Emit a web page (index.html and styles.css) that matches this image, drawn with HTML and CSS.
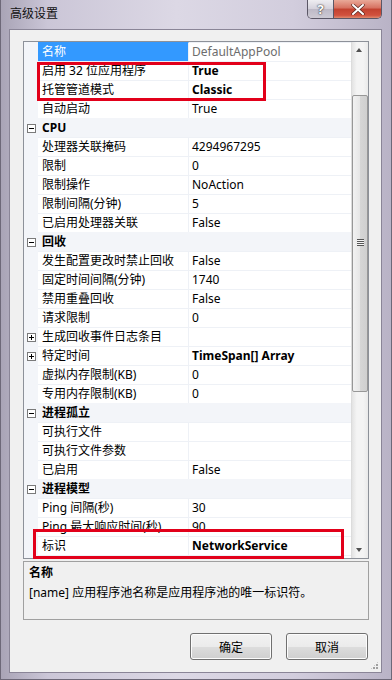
FILE: index.html
```html
<!DOCTYPE html>
<html>
<head>
    <meta charset="utf-8">
    <link rel="stylesheet" href="styles.css">
</head>
<body>
    <div class="window">
        <div class="titlebar">
            <span class="title">高级设置</span>
            <div class="caption-btns">
                <span class="cap help">?</span>
                <span class="cap close">
                    <svg width="14" height="11" viewBox="0 0 14 11">
                        <path d="M2 1 L12 10 M12 1 L2 10" stroke="#5a2a22" stroke-width="3.4" stroke-linecap="round"/>
                        <path d="M2 1 L12 10 M12 1 L2 10" stroke="#ffffff" stroke-width="2" stroke-linecap="round"/>
                    </svg>
                </span>
            </div>
        </div>

        <div class="client">
            <div class="grid">
                <div class="rows">
                    <div class="row selected"><span class="gutter"></span><span class="name">名称</span><span class="value readonly">DefaultAppPool</span></div>
                    <div class="row"><span class="gutter"></span><span class="name">启用 32 位应用程序</span><span class="value bold">True</span></div>
                    <div class="row"><span class="gutter"></span><span class="name">托管管道模式</span><span class="value bold">Classic</span></div>
                    <div class="row"><span class="gutter"></span><span class="name">自动启动</span><span class="value">True</span></div>

                    <div class="row category"><span class="gutter"><i class="toggle"></i></span><span class="cat-name">CPU</span></div>
                    <div class="row"><span class="gutter"></span><span class="name">处理器关联掩码</span><span class="value">4294967295</span></div>
                    <div class="row"><span class="gutter"></span><span class="name">限制</span><span class="value">0</span></div>
                    <div class="row"><span class="gutter"></span><span class="name">限制操作</span><span class="value">NoAction</span></div>
                    <div class="row"><span class="gutter"></span><span class="name">限制间隔(分钟)</span><span class="value">5</span></div>
                    <div class="row"><span class="gutter"></span><span class="name">已启用处理器关联</span><span class="value">False</span></div>

                    <div class="row category"><span class="gutter"><i class="toggle"></i></span><span class="cat-name">回收</span></div>
                    <div class="row"><span class="gutter"></span><span class="name">发生配置更改时禁止回收</span><span class="value">False</span></div>
                    <div class="row"><span class="gutter"></span><span class="name">固定时间间隔(分钟)</span><span class="value">1740</span></div>
                    <div class="row"><span class="gutter"></span><span class="name">禁用重叠回收</span><span class="value">False</span></div>
                    <div class="row"><span class="gutter"></span><span class="name">请求限制</span><span class="value">0</span></div>
                    <div class="row"><span class="gutter"><i class="toggle plus"></i></span><span class="name">生成回收事件日志条目</span><span class="value"></span></div>
                    <div class="row"><span class="gutter"><i class="toggle plus"></i></span><span class="name">特定时间</span><span class="value bold">TimeSpan[] Array</span></div>
                    <div class="row"><span class="gutter"></span><span class="name">虚拟内存限制(KB)</span><span class="value">0</span></div>
                    <div class="row"><span class="gutter"></span><span class="name">专用内存限制(KB)</span><span class="value">0</span></div>

                    <div class="row category"><span class="gutter"><i class="toggle"></i></span><span class="cat-name">进程孤立</span></div>
                    <div class="row"><span class="gutter"></span><span class="name">可执行文件</span><span class="value"></span></div>
                    <div class="row"><span class="gutter"></span><span class="name">可执行文件参数</span><span class="value"></span></div>
                    <div class="row"><span class="gutter"></span><span class="name">已启用</span><span class="value">False</span></div>

                    <div class="row category"><span class="gutter"><i class="toggle"></i></span><span class="cat-name">进程模型</span></div>
                    <div class="row"><span class="gutter"></span><span class="name">Ping 间隔(秒)</span><span class="value">30</span></div>
                    <div class="row"><span class="gutter"></span><span class="name">Ping 最大响应时间(秒)</span><span class="value">90</span></div>
                    <div class="row"><span class="gutter"></span><span class="name">标识</span><span class="value bold">NetworkService</span></div>
                    <div class="row"><span class="gutter"></span><span class="name"></span><span class="value"></span></div>
                </div>
                <div class="scrollbar">
                    <div class="sb-btn"><i class="arrow up"></i></div>
                    <div class="sb-track"><div class="sb-thumb"><i class="grip"></i></div></div>
                    <div class="sb-btn"><i class="arrow down"></i></div>
                </div>
            </div>

            <div class="desc">
                <div class="desc-title">名称</div>
                <div class="desc-text">[name] 应用程序池名称是应用程序池的唯一标识符。</div>
            </div>

            <div class="buttons">
                <button class="btn">确定</button>
                <button class="btn">取消</button>
            </div>
            <span class="size-grip"></span>
        </div>

        <div class="mark mark-top"></div>
        <div class="mark mark-bottom"></div>
    </div>
</body>
</html>
```

FILE: styles.css
```css
body {
    margin: 0;
    padding: 0;
    font-family: "Noto Sans", "Noto Sans CJK SC", sans-serif;
    font-size: 12px;
    color: #000;
}

.window {
    position: relative;
    width: 392px;
    height: 680px;
    box-sizing: border-box;
    padding: 0 9px 6px 8px;
    display: flex;
    flex-direction: column;
    background: linear-gradient(90deg, #a9a4b6 0, #cbc6d7 12%, #dcd8e5 45%, #d2cddd 75%, #b9b3c6 100%);
    border-left: 1px solid #6d6878;
    border-right: 1px solid #6d6878;
    border-bottom: 1px solid #6d6878;
}

.titlebar {
    height: 29px;
    display: flex;
    align-items: flex-start;
    justify-content: space-between;
}

.title {
    margin-top: 5px;
    margin-left: 1px;
    font-size: 12px;
    line-height: 18px;
    color: #111;
}

.caption-btns {
    display: flex;
    border: 1px solid #5b5766;
    border-top: none;
    border-radius: 0 0 5px 5px;
    overflow: hidden;
    height: 18px;
}

.cap {
    height: 18px;
    display: flex;
    align-items: center;
    justify-content: center;
}

.help {
    width: 25px;
    background: linear-gradient(#eeedf1, #d4d1db 50%, #bdb9c6 51%, #cdcad4);
    border-right: 1px solid #5b5766;
    color: #fff;
    font-weight: bold;
    font-size: 13px;
    text-shadow: 0 0 2px #333, 0 0 1px #333;
}

.close {
    width: 47px;
    background: linear-gradient(#e9a998, #d6705f 45%, #c2412f 50%, #d1523e 85%, #e08a6f);
}

.client {
    flex: 1;
    position: relative;
    display: flex;
    flex-direction: column;
    background-color: #f0f0f0;
    border: 1px solid #8a8597;
    padding: 11px 12px 0 13px;
}

.grid {
    display: flex;
    height: 518px;
    box-sizing: border-box;
    border: 1px solid #8d9199;
    background-color: #fff;
}

.rows {
    flex: 1;
    overflow: hidden;
}

.row {
    display: grid;
    grid-template-columns: 14px 151px 1fr;
    height: 19px;
}

.row .name,
.row .value,
.row .cat-name {
    border-top: 1px solid #eef1f6;
    line-height: 18px;
    white-space: nowrap;
    overflow: hidden;
}

.gutter {
    background-color: #f3f5f9;
    position: relative;
}

.name {
    padding-left: 4px;
    border-right: 1px solid #eef1f6;
}

.value {
    padding-left: 3px;
}

.bold {
    font-weight: bold;
}

.readonly {
    color: #6d6d6d;
}

.selected .name {
    background-color: #3399ff;
    color: #fff;
    border-top-color: #3399ff;
}

.category .cat-name {
    grid-column: 2 / 4;
    padding-left: 4px;
    font-weight: bold;
    background-color: #f3f5f9;
    border-top-color: #f3f5f9;
}

.toggle {
    position: absolute;
    left: 3px;
    top: 6px;
    width: 7px;
    height: 7px;
    border: 1px solid #7a7a7a;
    background-color: #fff;
}

.toggle::before {
    content: "";
    position: absolute;
    left: 1px;
    top: 3px;
    width: 5px;
    height: 1px;
    background-color: #000;
}

.toggle.plus::after {
    content: "";
    position: absolute;
    left: 3px;
    top: 1px;
    width: 1px;
    height: 5px;
    background-color: #000;
}

.scrollbar {
    width: 17px;
    display: flex;
    flex-direction: column;
    background: linear-gradient(90deg, #e3e3e3, #f4f4f4 30%, #f4f4f4 70%, #eaeaea);
    border-left: 1px solid #dcdcdc;
    box-sizing: border-box;
}

.sb-btn {
    height: 17px;
    position: relative;
}

.arrow {
    position: absolute;
    left: 4px;
    width: 0;
    height: 0;
    border-left: 3.5px solid transparent;
    border-right: 3.5px solid transparent;
}

.arrow.up {
    top: 6px;
    border-bottom: 4px solid #505050;
}

.arrow.down {
    top: 7px;
    border-top: 4px solid #505050;
}

.sb-track {
    flex: 1;
    padding-top: 36px;
}

.sb-thumb {
    position: relative;
    height: 297px;
    box-sizing: border-box;
    border: 1px solid #979797;
    border-radius: 2px;
    background: linear-gradient(90deg, #f2f2f2, #e6e6e6 50%, #d6d6d6 51%, #cfcfcf);
}

.grip {
    position: absolute;
    left: 4px;
    top: 143px;
    width: 7px;
    height: 7px;
    background: repeating-linear-gradient(#555 0, #555 1px, #f5f5f5 1px, #f5f5f5 2px);
}

.desc {
    margin-top: 2px;
    height: 59px;
    box-sizing: border-box;
    border: 1px solid #a0a0a0;
    padding: 1px 5px 0 5px;
    line-height: 20px;
}

.desc-title {
    font-weight: bold;
}

.buttons {
    display: flex;
    justify-content: flex-end;
    gap: 14px;
    margin-top: 13px;
    padding-right: 1px;
}

.btn {
    width: 82px;
    height: 27px;
    font-family: "Noto Sans", "Noto Sans CJK SC", sans-serif;
    font-size: 12px;
    color: #000;
    border: 1px solid #707070;
    border-radius: 3px;
    background: linear-gradient(#f2f2f2, #ebebeb 50%, #dddddd 51%, #cfcfcf);
    box-shadow: inset 0 0 0 1px #fcfcfc;
    padding: 0;
}

.size-grip {
    position: absolute;
    right: 2px;
    bottom: 2px;
    width: 9px;
    height: 9px;
    background:
        radial-gradient(circle at 1px 1px, #a0a0a0 1px, transparent 1.2px) 0 0 / 3px 3px;
    clip-path: polygon(100% 0, 100% 100%, 0 100%);
}

.mark {
    position: absolute;
    box-sizing: border-box;
    border: 3px solid #e2001a;
}

.mark-top {
    left: 36px;
    top: 62px;
    width: 229px;
    height: 39px;
}

.mark-bottom {
    left: 32px;
    top: 529px;
    width: 311px;
    height: 30px;
}
```
